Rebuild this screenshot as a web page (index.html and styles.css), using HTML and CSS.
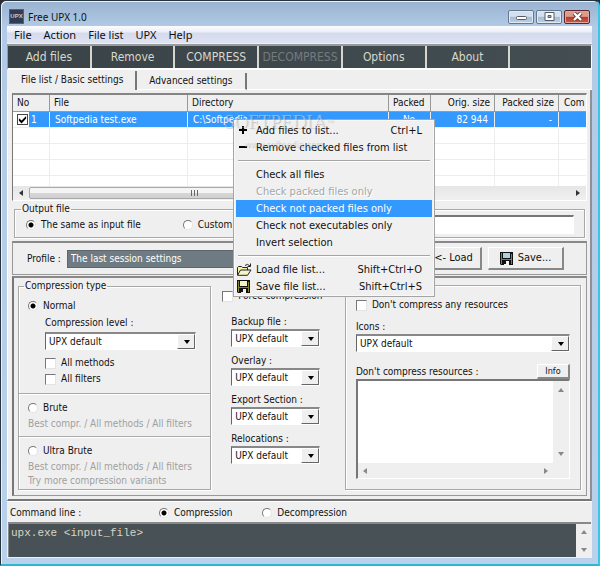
FILE: index.html
```html
<!DOCTYPE html>
<html lang="en">
<head>
    <meta charset="UTF-8">
    <meta name="viewport" content="width=device-width, initial-scale=1.0">
    <title>Free UPX 1.0</title>
    <link rel="stylesheet" href="styles.css">
</head>
<body>
    <svg width="0" height="0" class="defs" aria-hidden="true">
        <symbol id="disk" viewBox="0 0 13 13">
            <path d="M0 0h13v13H1L0 12z" fill="#111"/>
            <path d="M1 1h1v11H1zM11 2h1v10h-1zM2 7h9v1H2z" fill="#85842a"/>
            <path class="disk-label" d="M3 1h7v5H3z"/>
            <path d="M4 9h5v4H4z" fill="#f4f4f4"/>
            <path d="M4 9h2v3H4z" fill="#111"/>
        </symbol>
        <symbol id="folder" viewBox="0 0 15 13">
            <path d="M.5 12V4.500l1-1h3l1 1h5V7" fill="#f5f5a8" stroke="#222"/>
            <path d="M.5 12.300L3.500 7H14l-3.500 5.300z" fill="#f5f5c8" stroke="#222"/>
            <path d="M8 2.500Q10.500 0 13 3M13.500.500v3h-3" fill="none" stroke="#222"/>
        </symbol>
    </svg>

    <div class="window">
        <header class="titlebar">
            <span class="app-icon">UPX</span>
            <h1>Free UPX 1.0</h1>
            <div class="win-buttons">
                <button class="win-btn" aria-label="Minimize">
                    <svg width="11" height="9" viewBox="0 0 11 9"><rect x="0.5" y="4.5" width="10" height="3" rx="1" fill="#fff" stroke="#555c66"/></svg>
                </button>
                <button class="win-btn" aria-label="Maximize">
                    <svg width="11" height="9" viewBox="0 0 11 9"><path d="M1 .5h9v8H1z" fill="#fff" stroke="#555c66"/><path d="M4 3.5h3v2H4z" fill="#9fb4cc" stroke="#555c66"/></svg>
                </button>
                <button class="win-btn close" aria-label="Close">
                    <svg width="11" height="9" viewBox="0 0 11 9"><path d="M2 1l7 7M9 1L2 8" stroke="#5a3a3a" stroke-width="4"/><path d="M2 1l7 7M9 1L2 8" stroke="#fff" stroke-width="2.4"/></svg>
                </button>
            </div>
        </header>

        <div class="client">
            <nav class="menubar">
                <button>File</button>
                <button>Action</button>
                <button>File list</button>
                <button>UPX</button>
                <button>Help</button>
            </nav>

            <div class="toolbar">
                <button>Add files</button>
                <button>Remove</button>
                <button>COMPRESS</button>
                <button disabled>DECOMPRESS</button>
                <button>Options</button>
                <button>About</button>
                <span></span>
            </div>

            <div class="tabs">
                <button class="tab active">File list / Basic settings</button>
                <button class="tab">Advanced settings</button>
                <span class="tab-rest"></span>
            </div>

            <main class="page">
                <section class="file-list">
                    <table>
                        <colgroup>
                            <col class="c-no"><col class="c-file"><col><col class="c-packed"><col class="c-size"><col class="c-size"><col class="c-com">
                        </colgroup>
                        <thead>
                            <tr><th>No</th><th>File</th><th>Directory</th><th>Packed</th><th class="num">Orig. size</th><th class="num">Packed size</th><th class="com">Com</th></tr>
                        </thead>
                        <tbody>
                            <tr class="selected">
                                <td class="no"><label><input type="checkbox" checked><span>1</span></label></td>
                                <td>Softpedia test.exe</td>
                                <td>C:\Softpedia</td>
                                <td class="mid">No</td>
                                <td class="num">82 944</td>
                                <td class="num">-</td>
                                <td></td>
                            </tr>
                            <tr><td></td><td></td><td></td><td></td><td></td><td></td><td></td></tr>
                            <tr><td></td><td></td><td></td><td></td><td></td><td></td><td></td></tr>
                            <tr><td></td><td></td><td></td><td></td><td></td><td></td><td></td></tr>
                            <tr class="last"><td></td><td></td><td></td><td></td><td></td><td></td><td></td></tr>
                        </tbody>
                    </table>
                    <div class="scroll-h">
                        <i class="arrow left dark"></i>
                        <span class="thumb"><i></i><i></i><i></i></span>
                        <i class="arrow right dark"></i>
                    </div>
                </section>

                <fieldset class="group output">
                    <legend>Output file</legend>
                    <label class="opt same"><input type="radio" name="out" checked>The same as input file</label>
                    <label class="opt"><input type="radio" name="out">Custom</label>
                    <input class="text" type="text" aria-label="Custom output file">
                </fieldset>

                <section class="profile">
                    <label for="profile">Profile :</label>
                    <select id="profile"><option>The last session settings</option></select>
                    <button class="btn"><svg width="15" height="13"><use href="#folder"/></svg>&lt;- Load</button>
                    <button class="btn"><svg class="icon blue" width="13" height="13"><use href="#disk"/></svg>Save...</button>
                </section>

                <section class="options">
                    <fieldset class="group type">
                        <legend>Compression type</legend>
                        <div class="block normal">
                            <label class="opt"><input type="radio" name="type" checked>Normal</label>
                            <div class="sub">
                                <label for="level">Compression level :</label>
                                <span class="select"><select id="level"><option>UPX default</option></select></span>
                                <label class="opt"><input type="checkbox">All methods</label>
                                <label class="opt"><input type="checkbox">All filters</label>
                            </div>
                        </div>
                        <div class="block">
                            <label class="opt"><input type="radio" name="type">Brute</label>
                            <p>Best compr. / All methods / All filters</p>
                        </div>
                        <div class="block">
                            <label class="opt"><input type="radio" name="type">Ultra Brute</label>
                            <p>Best compr. / All methods / All filters<br>Try more compression variants</p>
                        </div>
                    </fieldset>

                    <div class="middle">
                        <label class="opt force"><input type="checkbox">Force compression</label>
                        <div class="field">
                            <label for="backup">Backup file :</label>
                            <span class="select"><select id="backup"><option>UPX default</option></select></span>
                        </div>
                        <div class="field">
                            <label for="overlay">Overlay :</label>
                            <span class="select"><select id="overlay"><option>UPX default</option></select></span>
                        </div>
                        <div class="field">
                            <label for="export">Export Section :</label>
                            <span class="select"><select id="export"><option>UPX default</option></select></span>
                        </div>
                        <div class="field">
                            <label for="reloc">Relocations :</label>
                            <span class="select"><select id="reloc"><option>UPX default</option></select></span>
                        </div>
                    </div>

                    <div class="group resources">
                        <label class="opt"><input type="checkbox">Don't compress any resources</label>
                        <div class="field">
                            <label for="icons">Icons :</label>
                            <span class="select"><select id="icons"><option>UPX default</option></select></span>
                        </div>
                        <div class="res-head">
                            <label for="res">Don't compress resources :</label>
                            <button class="btn small">Info</button>
                        </div>
                        <div class="memo">
                            <textarea id="res"></textarea>
                            <div class="bar-v"><i class="arrow up"></i><i class="arrow down"></i></div>
                            <div class="bar-h"><i class="arrow left"></i><i class="arrow right"></i></div>
                        </div>
                    </div>
                </section>
            </main>

            <footer class="command">
                <div class="command-head">
                    <label for="cmd">Command line :</label>
                    <label class="opt"><input type="radio" name="cmd" checked>Compression</label>
                    <label class="opt"><input type="radio" name="cmd">Decompression</label>
                </div>
                <div class="console">
                    <textarea id="cmd" spellcheck="false">upx.exe &lt;input_file&gt;</textarea>
                    <div class="bar-v"><i class="arrow up"></i><i class="arrow down"></i></div>
                </div>
            </footer>
        </div>

        <div class="watermark">SOFTPEDIA<sup>™</sup></div>

        <div class="context-menu" role="menu">
            <button role="menuitem">
                <svg class="icon" width="13" height="13" viewBox="0 0 13 13"><path d="M5 2h2v3h3v2H7v3H5V7H2V5h3z" fill="#000"/></svg>
                <span>Add files to list...</span><kbd>Ctrl+L</kbd>
            </button>
            <button role="menuitem">
                <svg class="icon" width="13" height="13" viewBox="0 0 13 13"><path d="M2 5h8v2H2z" fill="#000"/></svg>
                <span>Remove checked files from list</span>
            </button>
            <hr>
            <button role="menuitem"><span>Check all files</span></button>
            <button role="menuitem" disabled><span>Check packed files only</span></button>
            <button role="menuitem" class="hover"><span>Check not packed files only</span></button>
            <button role="menuitem"><span>Check not executables only</span></button>
            <button role="menuitem"><span>Invert selection</span></button>
            <hr>
            <button role="menuitem">
                <svg class="icon" width="15" height="13"><use href="#folder"/></svg>
                <span>Load file list...</span><kbd>Shift+Ctrl+O</kbd>
            </button>
            <button role="menuitem">
                <svg class="icon cream" width="13" height="13"><use href="#disk"/></svg>
                <span>Save file list...</span><kbd>Shift+Ctrl+S</kbd>
            </button>
            <div class="watermark url">www.softpedia.com</div>
        </div>
    </div>
</body>
</html>
```
FILE: styles.css
```css
* {
    box-sizing: border-box;
}
body {
    margin: 0;
    background: #2b2b30;
    font: 10px/12px "DejaVu Sans Condensed", "DejaVu Sans", sans-serif;
    color: #111;
}
button, input, select, textarea {
    font: inherit;
    color: inherit;
    margin: 0;
    padding: 0;
    border-radius: 0;
}
.defs {
    position: absolute;
}
.icon {
    flex: none;
}
.blue {
    fill: #a9d3df;
}
.cream {
    fill: #f5f3c0;
}

/* Window frame */
.window {
    position: relative;
    display: flex;
    flex-direction: column;
    min-height: 100vh;
    padding: 2px 6px 6px 6px;
    border: 1px solid #26343f;
    border-right: 2px solid #35c8ea;
    border-bottom: 2px solid #2bb9cf;
    border-radius: 6px 6px 0 0;
    background: linear-gradient(#98b2d0 0, #b2cae5 26px, #b9d1ea 100%);
    box-shadow: inset 1px 1px 0 #e8f1fa;
}
.titlebar {
    display: flex;
    align-items: center;
    height: 23px;
    padding: 4px 2px 0 2px;
}
.app-icon {
    width: 15px;
    height: 15px;
    background: #2f3c52;
    border: 1px solid #53627a;
    color: #c8cdd4;
    font: bold 6px/13px "Liberation Sans", sans-serif;
    text-align: center;
}
h1 {
    flex: 1;
    margin: 0 0 0 4px;
    font: 10px/14px "Noto Sans", sans-serif;
}
.win-buttons {
    display: flex;
    gap: 2px;
}
.win-btn {
    display: flex;
    align-items: center;
    justify-content: center;
    width: 26px;
    height: 14px;
    border: 1px solid #66788f;
    border-radius: 2px;
    background: linear-gradient(#d3e0ef 45%, #a5bbd4 50%, #bdd0e4);
    box-shadow: inset 0 0 0 1px #dfeaf5;
}
.win-btn.close {
    border-color: #5e2430;
    background: linear-gradient(#dc9c8c 45%, #b8392a 50%, #cb5a44);
    box-shadow: inset 0 0 0 1px #e0a89c;
}
.client {
    flex: 1;
    display: flex;
    flex-direction: column;
    background: #efefef;
}

/* Menu bar and toolbar */
.menubar {
    display: flex;
    gap: 12px;
    height: 17px;
    padding: 0 7px;
    background: linear-gradient(#fbfcfe, #eaeef7 6px, #d5dbee 7px, #dde3f3);
}
.menubar button {
    border: 0;
    background: none;
    font: 11px/17px "Noto Sans", sans-serif;
}
.toolbar {
    display: grid;
    grid-template-columns: repeat(6, minmax(0, 84fr)) minmax(0, 81fr);
    height: 26px;
    margin-top: 1px;
    border: 2px solid #fff;
    border-color: #9a9a9a #fff #fff #9a9a9a;
    border-width: 2px 1px 2px 1px;
    background: linear-gradient(90deg, #394247, #3f4a4f 60%, #434d52);
}
.toolbar button {
    border: 0;
    border-right: 2px solid #d6d6cf;
    background: none;
    color: #d8d8cc;
    font-size: 12px;
    line-height: 22px;
    text-align: center;
    white-space: nowrap;
    overflow: hidden;
}
.toolbar button:disabled {
    color: #757b7d;
}

/* Tabs */
.tabs {
    display: flex;
    align-items: flex-end;
    height: 20px;
    padding-top: 1px;
}
.tab {
    height: 17px;
    padding: 0 12px;
    border: 0;
    border-right: 2px solid #777;
    border-bottom: 1px solid #fff;
    background: none;
    white-space: nowrap;
}
.tab.active {
    height: 19px;
    padding: 0 12px 2px 14px;
    border-bottom: 0;
}
.tab-rest {
    flex: 1;
    border-bottom: 1px solid #fff;
}

/* File list */
.page {
    flex: 1;
    display: flex;
    flex-direction: column;
    padding: 3px 3px 3px 4px;
    border: 1px solid #fff;
    border-width: 0 2px 2px 1px;
    border-right-color: #8d9096;
    border-bottom-color: #777;
}
.file-list {
    border: 1px solid #fff;
    border-top: 2px solid #858585;
    border-left-color: #777;
    background: #fff;
}
table {
    width: 100%;
    table-layout: fixed;
    border-collapse: separate;
    border-spacing: 0;
}
.c-no { width: 37px; }
.c-file { width: 138px; }
.c-packed { width: 42px; }
.c-size { width: 64px; }
.c-com { width: 27px; }
th, td {
    height: 16px;
    padding: 0 6px;
    border-right: 1px solid #ededed;
    border-bottom: 1px solid #ededed;
    font-weight: normal;
    line-height: 14px;
    text-align: left;
    white-space: nowrap;
    overflow: hidden;
}
th {
    height: 17px;
    padding: 0 4px;
    background: #efefef;
    border-right-color: #999;
    border-bottom-color: #999;
}
th:last-child, td:last-child {
    border-right: 0;
}
td:nth-child(n+2) {
    padding-left: 5px;
}
th.num, td.num {
    text-align: right;
}
th.com {
    padding-left: 5px;
    padding-right: 0;
}
td.mid {
    text-align: center;
}
.selected td {
    background: #3399ff;
    color: #fff;
}
.selected .no {
    padding: 0;
    background: linear-gradient(90deg, #fff 16px, #3399ff 16px);
}
.no label {
    display: flex;
    align-items: center;
    gap: 3px;
    padding-left: 4px;
}
.last td {
    height: 10px;
    border-bottom: 0;
}
.scroll-h {
    display: flex;
    align-items: center;
    height: 14px;
    padding: 0 6px;
    background: linear-gradient(#e6e6e6, #f0f0f0);
}
.thumb {
    display: flex;
    align-items: center;
    justify-content: center;
    gap: 2px;
    width: 330px;
    height: 12px;
    margin: 0 auto 0 6px;
    border: 1px solid #a9a9a9;
    border-radius: 2px;
    background: linear-gradient(#f4f4f4 45%, #d6d6d6 55%, #cfcfcf);
}
.thumb i {
    width: 1px;
    height: 6px;
    background: #666;
}

/* Small triangles of scroll bars */
.arrow {
    width: 0;
    height: 0;
    border: 3px solid transparent;
}
.arrow.left { border-right: 4px solid #888; border-left: 0; }
.arrow.right { border-left: 4px solid #888; border-right: 0; }
.arrow.up { border-bottom: 4px solid #888; border-top: 0; }
.arrow.down { border-top: 4px solid #888; border-bottom: 0; }
.arrow.left.dark { border-right-color: #333; }
.arrow.right.dark { border-left-color: #333; }

/* Groups and form controls */
.group {
    min-width: 0;
    margin: 0;
    padding: 0;
    border: 1px solid #a8a8a8;
    box-shadow: 1px 1px 0 #fff, inset 1px 1px 0 #fff;
}
legend {
    padding: 0 1px;
    margin-left: 5px;
}
.opt {
    display: flex;
    align-items: center;
    gap: 5px;
    white-space: nowrap;
}
input[type="checkbox"], input[type="radio"] {
    appearance: none;
    flex: none;
    width: 11px;
    height: 11px;
    background: #fff;
    border: 1px solid #777;
    border-right-color: #e4e4e4;
    border-bottom-color: #e4e4e4;
}
input[type="radio"] {
    border-radius: 50%;
    width: 10px;
    height: 10px;
}
input[type="radio"]:checked {
    background: radial-gradient(circle, #000 2px, #fff 3px);
}
.no input[type="checkbox"] {
    border: 1px solid #444;
}
input[type="checkbox"]:checked::before {
    content: "";
    display: block;
    width: 9px;
    height: 9px;
    background: #000;
    clip-path: polygon(10% 35%, 40% 60%, 90% 10%, 90% 40%, 40% 95%, 10% 65%);
}
.select {
    position: relative;
    display: block;
}
.select select {
    appearance: none;
    display: block;
    width: 100%;
    height: 18px;
    padding: 0 18px 0 3px;
    background: #fff;
    border: 1px solid #fff;
    border-top: 2px solid #888;
    border-left: 1px solid #666;
}
.select::before {
    content: "";
    position: absolute;
    top: 2px;
    right: 1px;
    bottom: 1px;
    width: 16px;
    background: #efefef;
    border: 1px solid #666;
    border-top-color: #fff;
    border-left-color: #fff;
    pointer-events: none;
}
.select::after {
    content: "";
    position: absolute;
    top: 8px;
    right: 6px;
    border: 3px solid transparent;
    border-top: 4px solid #000;
    border-bottom: 0;
    pointer-events: none;
}
.btn {
    display: flex;
    align-items: center;
    justify-content: center;
    gap: 5px;
    width: 76px;
    height: 23px;
    border: 1px solid #fff;
    border-right: 2px solid #888;
    border-bottom: 2px solid #888;
    background: #efefef;
    font-size: 11px;
    white-space: nowrap;
}
.btn.small {
    width: 33px;
    height: 15px;
    font-size: 9px;
}
.output {
    display: flex;
    align-items: center;
    height: 35px;
    margin: 2px 2px 3px 2px;
    padding: 0 10px 3px 0;
}
.output legend {
    margin-left: 6px;
}
.output .same {
    margin-left: 11px;
    margin-right: 42px;
}
.text {
    flex: 1;
    min-width: 0;
    height: 19px;
    margin-left: 16px;
    border: 1px solid #fff;
    border-top: 2px solid #777;
    border-left-color: #777;
    background: #fff;
}
.profile {
    display: flex;
    align-items: center;
    gap: 6px;
    height: 34px;
    padding: 0 22px 0 14px;
    border: 1px solid #999;
    border-top: 2px solid #888;
}
.profile select {
    appearance: none;
    flex: 1;
    min-width: 0;
    height: 18px;
    padding: 0 3px;
    border: 1px solid #5c666c;
    background: #6e7b82;
    color: #fff;
}

/* Compression options */
.options {
    flex: 1;
    display: grid;
    grid-template-columns: minmax(0, 194fr) minmax(0, 100fr) minmax(0, 237fr);
    column-gap: 17px;
    margin-top: 1px;
    padding: 2px 5px 5px 4px;
    border: 1px solid #999;
    border-top: 2px solid #888;
    border-left: 2px solid #777;
}
.block {
    padding: 8px 8px 0 9px;
    border-top: 1px solid #aaa;
    box-shadow: inset 0 1px 0 #fff;
}
.block:nth-of-type(2) {
    height: 43px;
}
.block.normal {
    height: 101px;
    border-top: 0;
    box-shadow: none;
}
.block p {
    margin: 3px 0 0 0;
    color: #a0a0a0;
    line-height: 14px;
    white-space: nowrap;
}
.sub {
    display: flex;
    flex-direction: column;
    gap: 4px;
    padding: 6px 6px 0 17px;
}
.sub > label:first-child {
    line-height: 10px;
}
.sub .select + .opt {
    margin-top: 3px;
}
.middle {
    display: flex;
    flex-direction: column;
    gap: 8px;
    padding: 10px 8px 0 3px;
}
.force {
    margin-left: -9px;
    margin-bottom: 6px;
}
.field {
    display: flex;
    flex-direction: column;
    gap: 1px;
}
.resources {
    display: flex;
    flex-direction: column;
    margin-top: 5px;
    padding: 13px 10px 10px 10px;
}
.resources .field {
    margin-top: 10px;
}
.res-head {
    display: flex;
    align-items: center;
    justify-content: space-between;
    margin-top: 12px;
}
.memo {
    flex: 1;
    display: grid;
    grid-template: minmax(80px, 1fr) 15px / minmax(0, 1fr) 16px;
    border: 1px solid #fff;
    border-top: 2px solid #777;
    border-left: 2px solid #777;
    background: #efefef;
}
textarea {
    resize: none;
    border: 0;
    outline: 0;
    background: #fff;
    overflow: hidden;
}
.bar-v, .bar-h {
    display: flex;
    justify-content: space-between;
    align-items: center;
    background: #efefef;
}
.bar-v {
    flex-direction: column;
    padding: 7px 0;
}
.bar-h {
    padding: 0 5px;
}

/* Command line */
.command {
    padding: 0 1px 1px 1px;
    border-top: 1px solid #fff;
}
.command-head {
    display: flex;
    align-items: center;
    height: 20px;
    padding: 2px 2px 0 2px;
}
.command-head > label:first-child {
    width: 149px;
}
.command-head .opt {
    margin-right: 30px;
}
.console {
    display: grid;
    grid-template-columns: minmax(0, 1fr) 15px;
    height: 35px;
    border-top: 2px solid #888;
    border-left: 1px solid #888;
}
.console textarea {
    padding: 3px 2px;
    background: #485156;
    color: #d8d6c4;
    font: 11px/13px "Liberation Mono", monospace;
}
.console .bar-v {
    padding: 6px 0 5px 0;
}

/* Context menu floats over the file list */
.context-menu {
    position: absolute;
    top: 118px;
    left: 232px;
    width: 202px;
    padding: 2px 2px 1px 2px;
    border: 1px solid #a5a5a5;
    background: #f0f0f0;
    box-shadow: inset 0 0 0 1px #f8f8f8;
    font-size: 11px;
}
.context-menu button {
    display: grid;
    grid-template-columns: 20px 1fr auto;
    align-items: center;
    width: 100%;
    height: 17px;
    padding: 0 10px 0 0;
    border: 0;
    background: none;
    text-align: left;
    white-space: nowrap;
}
.context-menu .icon {
    margin-left: 1px;
}
.context-menu span {
    grid-column: 2;
}
.context-menu kbd {
    font: inherit;
}
.context-menu .hover {
    background: #3399ff;
    color: #fff;
}
.context-menu button:disabled {
    color: #a6a6a6;
    text-shadow: 1px 1px 0 #fff;
}
.context-menu hr {
    height: 2px;
    margin: 4px 2px;
    border: 0;
    border-top: 1px solid #a5a5a5;
    border-bottom: 1px solid #fff;
}
.watermark {
    position: absolute;
    z-index: 1;
    top: 109px;
    left: 223px;
    color: rgba(255, 255, 255, 0.4);
    font: 19px/24px "Liberation Serif", serif;
    text-shadow: 1px 1px 1px rgba(60, 60, 60, 0.25);
    pointer-events: none;
}
.watermark sup {
    font-size: 7px;
    vertical-align: top;
}
.watermark.url {
    top: 18px;
    left: 10px;
    font: 9px/12px "DejaVu Sans Condensed", sans-serif;
}
```
